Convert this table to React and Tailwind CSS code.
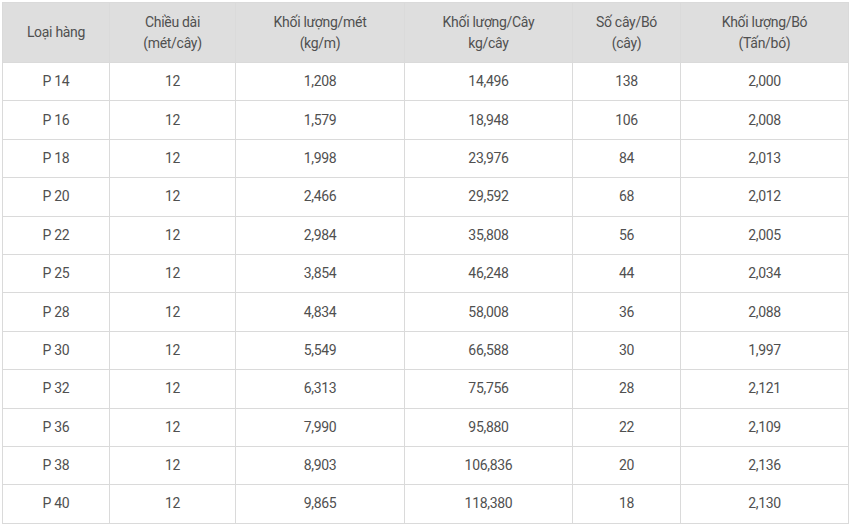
export default function App() {
  const headers = [
    ["Loại hàng"],
    ["Chiều dài", "(mét/cây)"],
    ["Khối lượng/mét", "(kg/m)"],
    ["Khối lượng/Cây", "kg/cây"],
    ["Số cây/Bó", "(cây)"],
    ["Khối lượng/Bó", "(Tấn/bó)"],
  ];
  const rows = [
    ["P 14", "12", "1,208", "14,496", "138", "2,000"],
    ["P 16", "12", "1,579", "18,948", "106", "2,008"],
    ["P 18", "12", "1,998", "23,976", "84", "2,013"],
    ["P 20", "12", "2,466", "29,592", "68", "2,012"],
    ["P 22", "12", "2,984", "35,808", "56", "2,005"],
    ["P 25", "12", "3,854", "46,248", "44", "2,034"],
    ["P 28", "12", "4,834", "58,008", "36", "2,088"],
    ["P 30", "12", "5,549", "66,588", "30", "1,997"],
    ["P 32", "12", "6,313", "75,756", "28", "2,121"],
    ["P 36", "12", "7,990", "95,880", "22", "2,109"],
    ["P 38", "12", "8,903", "106,836", "20", "2,136"],
    ["P 40", "12", "9,865", "118,380", "18", "2,130"],
  ];
  const widths = ["w-[107px]", "w-[126px]", "w-[169px]", "w-[168px]", "w-[108px]", "w-[168px]"];
  return (
    <div className="bg-white w-[856px] h-[527px] pt-[2px] pl-[2px]" style={{ fontFamily: "Roboto, 'Liberation Sans', sans-serif" }}>
      <table className="border-collapse text-[14px] text-[#505050] tracking-[-0.3px] w-[847px] table-fixed">
        <colgroup>
          {widths.map((w, i) => (
            <col key={i} className={w} />
          ))}
        </colgroup>
        <thead>
          <tr className="bg-[#dedede] h-[60px]">
            {headers.map((h, i) => (
              <th key={i} className="font-normal text-center border border-[#dadada] leading-[21px] align-middle">
                {h.map((l, j) => (
                  <div key={j}>{l}</div>
                ))}
              </th>
            ))}
          </tr>
        </thead>
        <tbody>
          {rows.map((r, i) => (
            <tr key={i} className="h-[38.4px]">
              {r.map((c, j) => (
                <td key={j} className="text-center border border-[#dadada] align-middle">
                  {c}
                </td>
              ))}
            </tr>
          ))}
        </tbody>
      </table>
    </div>
  );
}
